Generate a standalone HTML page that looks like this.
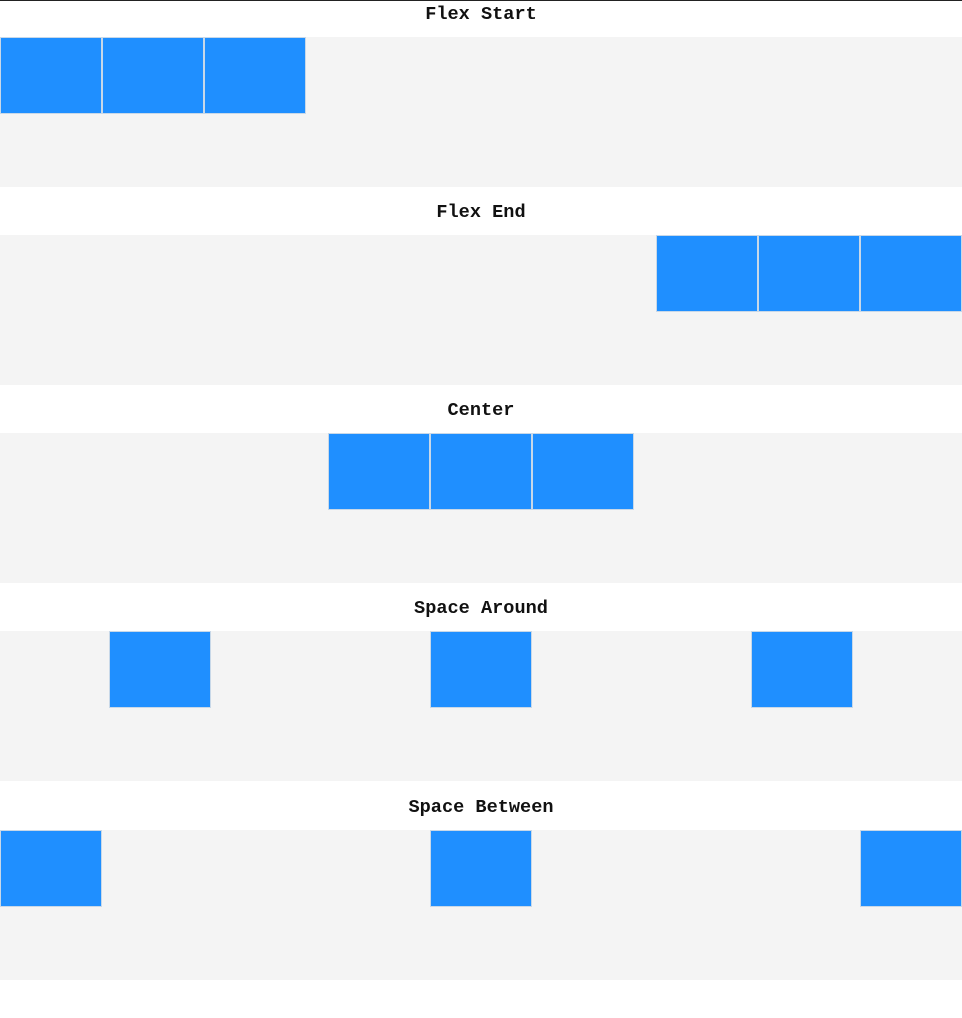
<!DOCTYPE html>
<html><head><style>
html,body{margin:0;padding:0;background:#fff;}
body{width:962px;height:1018px;border-top:1px solid #222;box-sizing:border-box;position:relative;overflow:hidden;}
.t{position:absolute;left:0;width:962px;text-align:center;font:bold 18.6px "Liberation Mono",monospace;color:#111;}
.s{position:absolute;left:0;width:962px;height:150px;background:#f4f4f4;display:flex;align-items:flex-start;}
.b{width:100px;height:75px;background:#1f8fff;border:1px solid #c8d8e8;flex:none;}
</style></head><body>
<div class="t" style="top:3px">Flex Start</div>
<div class="s" style="top:36px;justify-content:flex-start"><div class="b"></div><div class="b"></div><div class="b"></div></div>
<div class="t" style="top:201px">Flex End</div>
<div class="s" style="top:234px;justify-content:flex-end"><div class="b"></div><div class="b"></div><div class="b"></div></div>
<div class="t" style="top:399px">Center</div>
<div class="s" style="top:432px;justify-content:center"><div class="b"></div><div class="b"></div><div class="b"></div></div>
<div class="t" style="top:597px">Space Around</div>
<div class="s" style="top:630px;justify-content:space-around"><div class="b"></div><div class="b"></div><div class="b"></div></div>
<div class="t" style="top:796px">Space Between</div>
<div class="s" style="top:829px;justify-content:space-between"><div class="b"></div><div class="b"></div><div class="b"></div></div>
</body></html>
